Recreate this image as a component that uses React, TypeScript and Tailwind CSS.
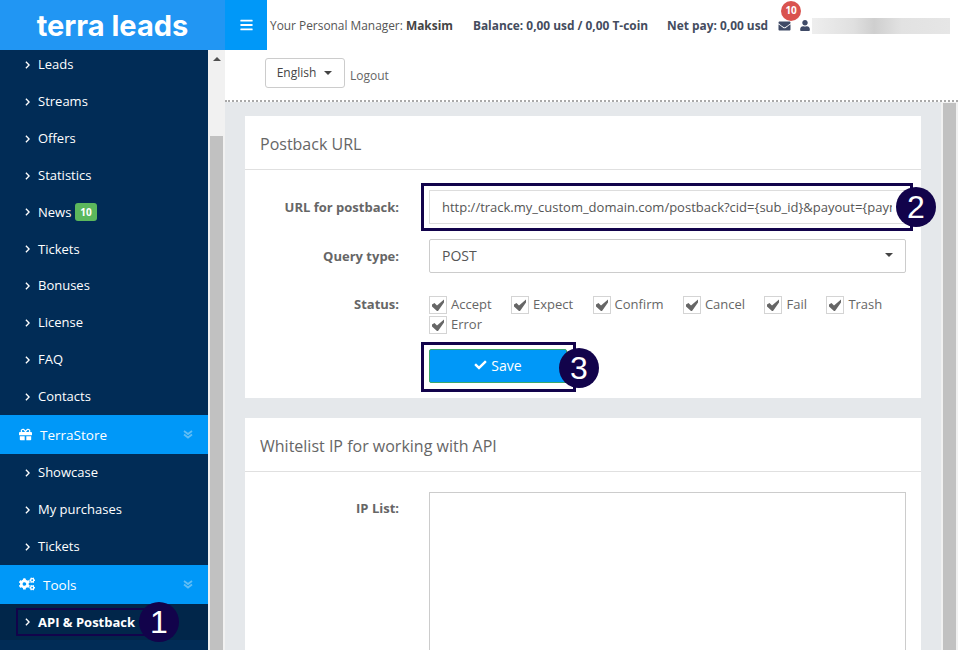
import { FaBars, FaEnvelope, FaUser, FaGift, FaCogs, FaCheck } from "react-icons/fa";

const topItems = ["Leads", "Streams", "Offers", "Statistics", "News", "Tickets", "Bonuses", "License", "FAQ", "Contacts"];
const storeItems = ["Showcase", "My purchases", "Tickets"];
const statuses = ["Accept", "Expect", "Confirm", "Cancel", "Fail", "Trash", "Error"];

function NavRow({ label, badge, active }: { label: string; badge?: string; active?: boolean }) {
  return (
    <div className={`flex h-[36.9px] items-center pt-[0.8px] pl-[25px] text-[13px] text-white ${active ? "bg-[#01264a] font-bold" : ""}`}>
      <svg viewBox="0 0 6 10" className="mr-[8px] h-[8px] w-[5px] shrink-0" fill="none" stroke="currentColor" strokeWidth="1.7">
        <polyline points="1,1 5,5 1,9" />
      </svg>
      <span>{label}</span>
      {badge && (
        <span className="ml-[4px] flex h-[18px] items-center rounded-[3px] bg-[#5cb85c] px-[5px] text-[10px] font-bold">{badge}</span>
      )}
    </div>
  );
}

function NavGroup({ icon, label, gap }: { icon: React.ReactNode; label: string; gap: string }) {
  return (
    <div className="flex h-[39px] items-center bg-[#0098f8] pr-[15px] pl-[19px] text-[13.5px] text-white">
      {icon}
      <span className={`pt-[2px] ${gap}`}>{label}</span>
      <svg viewBox="0 0 10 9" className="ml-auto h-[9px] w-[10px]" fill="none" stroke="#5fbdf5" strokeWidth="1.8">
        <polyline points="1,1 5,4 9,1" />
        <polyline points="1,4.5 5,7.5 9,4.5" />
      </svg>
    </div>
  );
}

function Circle({ n, className }: { n: string; className: string }) {
  return (
    <div className={`absolute z-20 flex h-[40px] w-[40px] items-center justify-center rounded-full bg-[#12034b] font-['Liberation_Sans',sans-serif] text-[32px] text-white ${className}`}>
      {n}
    </div>
  );
}

function Check({ label }: { label: string }) {
  return (
    <label className="flex h-[20px] items-center gap-[4px] text-[13px] text-[#666]">
      <span className="flex h-[18px] w-[18px] items-center justify-center border border-[#d4d4d4] bg-white">
        <svg viewBox="0 0 12 12" className="h-[12px] w-[12px]">
          <path d="M0 5.5 L2.5 4 L5 6.5 L12 0.5 L12 3.5 L6 12 L5 12 L0 7.5 Z" fill="#666" />
        </svg>
      </span>
      {label}
    </label>
  );
}

export default function App() {
  return (
    <div className="relative flex h-[650px] w-[958px] flex-col overflow-hidden bg-white font-['Open_Sans',sans-serif]">
      <header className="flex h-[50px] shrink-0 items-center">
        <div className="flex h-full w-[225px] shrink-0 items-center justify-center bg-[#2196f3] font-['Inter',sans-serif] text-[29px] leading-none font-bold text-white">
          terra leads
        </div>
        <div className="flex h-full w-[42px] shrink-0 items-center justify-center bg-[#0098f8] text-white">
          <FaBars className="h-[14px] w-[13px]" />
        </div>
        <div className="mt-[2px] flex items-center pl-[3px] text-[11.9px] whitespace-nowrap text-[#555]">
          <span>
            Your Personal Manager: <b className="text-[#444]">Maksim</b>
          </span>
          <b className="ml-[20px] text-[#444c5e]">Balance: 0,00 usd / 0,00 T-coin</b>
          <b className="ml-[19px] text-[#444c5e]">Net pay: 0,00 usd</b>
          <span className="relative ml-[10px]">
            <FaEnvelope className="h-[12px] w-[13px] text-[#3f4a66]" />
            <span className="absolute -top-[19px] left-[3px] flex h-[20px] w-[20px] items-center justify-center rounded-full bg-[#d9534f] text-[10px] font-bold text-white">
              10
            </span>
          </span>
          <FaUser className="ml-[9px] h-[11px] w-[10px] text-[#3f4a66]" />
          <div className="ml-[2px] h-[16px] w-[138px] bg-[linear-gradient(90deg,#eeeeee,#e0e0e0_30%,#cfcfcf_45%,#e2e2e2_65%,#e6e6e6)]" />
        </div>
      </header>

      <div className="flex min-h-0 flex-1">
        <aside className="flex w-[225px] shrink-0">
          <nav className="w-[208px] overflow-hidden bg-[#012c56]">
            <div className="-mt-[4px]">
              {topItems.map((t) => (
                <NavRow key={t} label={t} badge={t === "News" ? "10" : undefined} />
              ))}
              <NavGroup icon={<FaGift className="h-[13px] w-[13px]" />} label="TerraStore" gap="ml-[8px]" />
              {storeItems.map((t, i) => (
                <NavRow key={i} label={t} />
              ))}
              <NavGroup icon={<FaCogs className="h-[14px] w-[16px]" />} label="Tools" gap="ml-[8px]" />
              <NavRow label="API & Postback" active />
            </div>
          </nav>
          <div className="relative flex w-[17px] flex-col bg-[#f1f1f1]">
            <div className="flex h-[17px] items-center justify-center pt-[1px]">
              <div className="h-0 w-0 border-x-[4px] border-b-[4px] border-x-transparent border-b-[#505050]" />
            </div>
            <div className="mx-[2px] mt-[69px] flex-1 bg-[#c1c1c1]" />
          </div>
        </aside>

        <div className="flex min-w-0 flex-1 flex-col">
          <div className="flex h-[52px] shrink-0 items-center border-b-2 border-dotted border-[#a9a9a9] bg-white pb-[4px] pl-[40px]">
            <button className="flex h-[30px] w-[80px] items-center justify-center gap-[8px] rounded-[3px] border border-[#ccc] pr-[1px] text-[12px] text-[#444]">
              English
              <span className="h-0 w-0 border-x-[4px] border-t-[4px] border-x-transparent border-t-[#444]" />
            </button>
            <span className="mt-[6px] ml-[5px] text-[12px] text-[#666]">Logout</span>
          </div>

          <div className="flex min-h-0 flex-1 bg-[#e5e8eb]">
            <main className="min-w-0 flex-1 overflow-hidden px-[20px] pt-[14px]">
              <section className="h-[282px] bg-white">
                <h2 className="flex h-[54px] items-center border-b border-[#e0e0e0] pt-[2px] pl-[15px] text-[16px] text-[#666]">Postback URL</h2>
                <div className="pt-[20px]">
                  <div className="flex h-[34px] items-center">
                    <div className="w-[154px] pt-[2px] text-right text-[13px] font-bold text-[#666]">URL for postback:</div>
                    <div className="ml-[30px] flex h-[34px] w-[477px] items-center overflow-hidden border border-[#ddd] px-[12px] pt-[2px] pr-[13px] text-[13px] whitespace-nowrap text-[#555]">
                      <span className="block overflow-hidden">http://track.my_custom_domain.com/postback?cid={"{sub_id}"}&payout={"{payment}"}</span>
                    </div>
                  </div>
                  <div className="mt-[15px] flex h-[34px] items-center">
                    <div className="w-[154px] pt-[2px] text-right text-[13px] font-bold text-[#666]">Query type:</div>
                    <div className="ml-[30px] flex h-[34px] w-[477px] items-center justify-between rounded-[2px] border border-[#ccc] pr-[12px] pb-[2px] pl-[12px] text-[14px] text-[#555]">
                      POST
                      <span className="h-0 w-0 border-x-[4px] border-t-[4px] border-x-transparent border-t-[#444]" />
                    </div>
                  </div>
                  <div className="mt-[22px] flex">
                    <div className="w-[154px] text-right text-[13px] font-bold text-[#666]">Status:</div>
                    <div className="ml-[30px] flex w-[477px] flex-wrap gap-x-[19.4px]">
                      {statuses.map((s, i) => (
                        <div key={s} className={i === 6 ? "basis-full" : ""}>
                          <Check label={s} />
                        </div>
                      ))}
                    </div>
                  </div>
                  <div className="mt-[14px] ml-[184px]">
                    <button className="flex h-[34px] w-[138px] items-center justify-center gap-[4px] rounded-[2px] border border-[#3aa76d] bg-[#0098f8] pb-[2px] text-[14px] text-white">
                      <FaCheck className="h-[12px] w-[13px]" />
                      Save
                    </button>
                  </div>
                </div>
              </section>

              <section className="mt-[20px] h-[400px] bg-white">
                <h2 className="flex h-[54px] items-center border-b border-[#e0e0e0] pt-[2px] pl-[15px] text-[16px] text-[#666]">Whitelist IP for working with API</h2>
                <div className="flex pt-[20px]">
                  <div className="w-[154px] pt-[7px] text-right text-[13px] font-bold text-[#666]">IP List:</div>
                  <div className="ml-[30px] h-[200px] w-[477px] border border-[#ccc]" />
                </div>
              </section>
            </main>
            <div className="flex w-[17px] shrink-0 justify-center bg-[#f1f1f1] pt-[1px]">
              <div className="w-[13px] bg-[#c1c1c1]" />
            </div>
          </div>
        </div>
      </div>

      <div className="absolute top-[183px] left-[421px] z-10 h-[48px] w-[492px] border-[3px] border-[#12034b]" />
      <div className="absolute top-[342px] left-[421px] z-10 h-[50px] w-[155px] border-[3px] border-[#12034b]" />
      <div className="absolute top-[608px] left-[16px] z-10 h-[28px] w-[130px] border-2 border-[#12034b]" />
      <Circle n="2" className="top-[187px] left-[896px]" />
      <Circle n="3" className="top-[348px] left-[559px]" />
      <Circle n="1" className="top-[602px] left-[139px]" />
    </div>
  );
}
